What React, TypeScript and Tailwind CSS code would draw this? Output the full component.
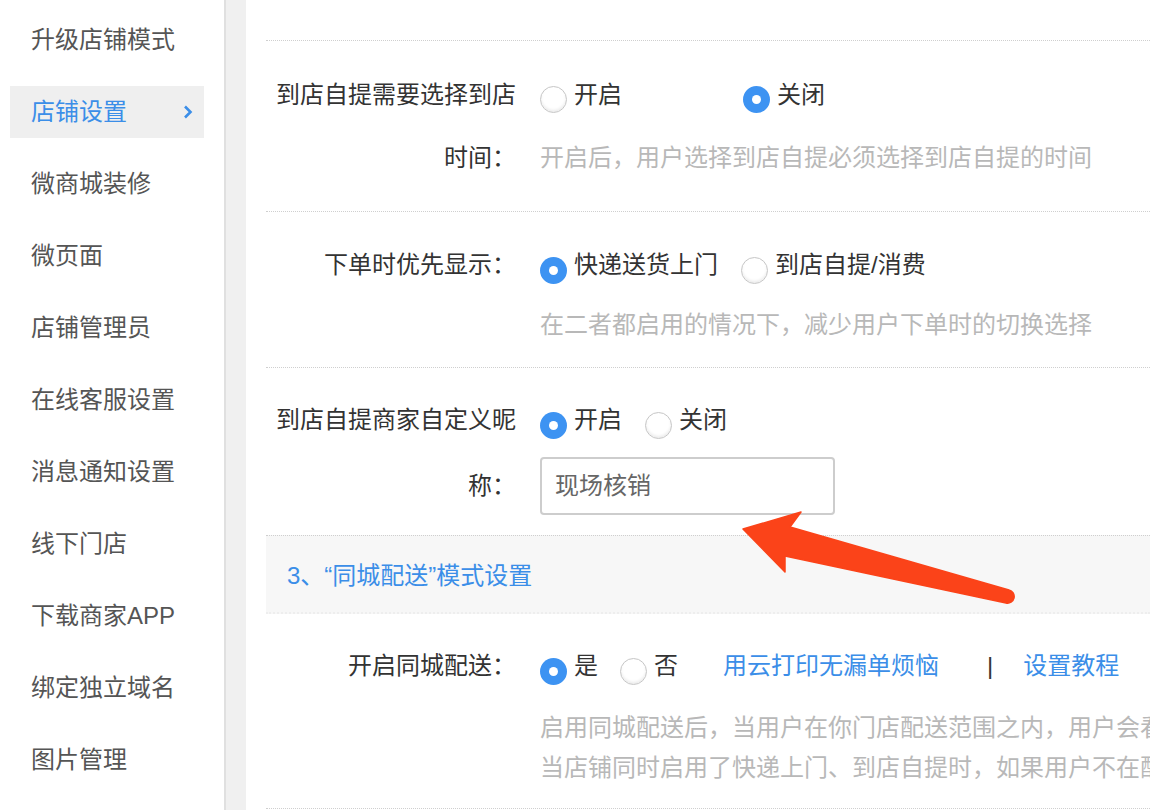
import React from 'react'

const menu = [
  '升级店铺模式',
  '店铺设置',
  '微商城装修',
  '微页面',
  '店铺管理员',
  '在线客服设置',
  '消息通知设置',
  '线下门店',
  '下载商家APP',
  '绑定独立域名',
  '图片管理',
]

function Radio({ checked }: { checked?: boolean }) {
  if (checked) {
    return (
      <span className="w-[27px] h-[27px] mt-[10px] shrink-0 rounded-full bg-[#3d93f2] flex items-center justify-center">
        <span className="w-[9px] h-[9px] rounded-full bg-white" />
      </span>
    )
  }
  return (
    <span className="w-[27px] h-[27px] mt-[10px] shrink-0 rounded-full border border-[#c6c6c6] bg-white shadow-[inset_0_-2px_3px_rgba(0,0,0,0.08)]" />
  )
}

function Option({ checked, label, className = '' }: { checked?: boolean; label: string; className?: string }) {
  return (
    <div className={`flex items-center ${className}`}>
      <Radio checked={checked} />
      <span className="ml-[7px] text-[#333]">{label}</span>
    </div>
  )
}

export default function App() {
  return (
    <div className="relative w-full h-[810px] overflow-hidden bg-white flex text-[24px] font-['Liberation_Sans','Noto_Sans_CJK_SC',sans-serif]">
      {/* Sidebar */}
      <div className="w-[224px] shrink-0 px-[10px] pt-[4px] flex flex-col">
        {menu.map((item) => {
          const active = item === '店铺设置'
          return (
            <div key={item} className="h-[72px] shrink-0 flex items-center">
              <div
                className={`w-[194px] h-[52px] pl-[21px] flex items-center ${
                  active ? 'bg-[#efefef] text-[#3b8ee8]' : 'text-[#555]'
                }`}
              >
                <span>{item}</span>
                {active && (
                  <svg className="ml-auto mr-[11px]" width="10" height="14" viewBox="0 0 10 14">
                    <path d="M2 1.5 L7.5 7 L2 12.5" fill="none" stroke="#3b8ee8" strokeWidth="2.6" />
                  </svg>
                )}
              </div>
            </div>
          )
        })}
      </div>
      <div className="w-[22px] shrink-0 border-l-2 border-[#e0e0e0] bg-[#f0f0f0]" />

      {/* Main */}
      <div className="flex-1 min-w-0 pl-[20px] pt-[40px]">
        {/* Row 1 */}
        <div className="border-t border-dotted border-[#cfcfcf] pt-[22px] pb-[22px] flex">
          <div className="w-[250px] shrink-0 text-right text-[#333]">
            <div className="leading-[63px]">到店自提需要选择到店</div>
            <div className="leading-[63px]">时间：</div>
          </div>
          <div className="ml-[24px] flex-1 min-w-0">
            <div className="h-[63px] flex items-center">
              <Option label="开启" />
              <Option checked label="关闭" className="ml-[121px]" />
            </div>
            <div className="h-[63px] flex items-center text-[#b8b8b8] whitespace-nowrap">
              开启后，用户选择到店自提必须选择到店自提的时间
            </div>
          </div>
        </div>

        {/* Row 2 */}
        <div className="border-t border-dotted border-[#cfcfcf] pt-[23px] pb-[12px] flex">
          <div className="w-[250px] shrink-0 text-right text-[#333] leading-[60px]">下单时优先显示：</div>
          <div className="ml-[24px] flex-1 min-w-0">
            <div className="h-[60px] flex items-center">
              <Option checked label="快递送货上门" />
              <Option label="到店自提/消费" className="ml-[23px]" />
            </div>
            <div className="h-[60px] flex items-center text-[#b8b8b8] whitespace-nowrap">
              在二者都启用的情况下，减少用户下单时的切换选择
            </div>
          </div>
        </div>

        {/* Row 3 */}
        <div className="border-t border-dotted border-[#cfcfcf] pt-[22px] pb-[13px] flex">
          <div className="w-[250px] shrink-0 text-right text-[#333]">
            <div className="leading-[60px]">到店自提商家自定义昵</div>
            <div className="leading-[72px]">称：</div>
          </div>
          <div className="ml-[24px] flex-1 min-w-0">
            <div className="h-[60px] flex items-center">
              <Option checked label="开启" />
              <Option label="关闭" className="ml-[23px]" />
            </div>
            <div className="mt-[7px] w-[295px] h-[58px] border-2 border-[#cdcdcd] rounded-[4px] pl-[13px] flex items-center text-[#666]">
              现场核销
            </div>
          </div>
        </div>

        {/* Section header */}
        <div className="border-t border-dotted border-[#cfcfcf] bg-[#f7f7f7] border-b-2 border-b-[#eeeeee] h-[79px] pt-[4px] pl-[21px] flex items-center text-[#3b8ee8]">
          3、“同城配送”模式设置
        </div>

        {/* Row 4 */}
        <div className="pt-[22px] pb-[20px] flex border-b border-dotted border-[#cfcfcf]">
          <div className="w-[250px] shrink-0 text-right text-[#333] leading-[60px]">开启同城配送：</div>
          <div className="ml-[24px] flex-1 min-w-0">
            <div className="h-[60px] flex items-center whitespace-nowrap">
              <Option checked label="是" />
              <Option label="否" className="ml-[22px]" />
              <span className="ml-[45px] text-[#3b8ee8]">用云打印无漏单烦恼</span>
              <span className="ml-[48px] text-[#333]">|</span>
              <span className="ml-[30px] text-[#3b8ee8]">设置教程</span>
            </div>
            <div className="mt-[12px] text-[#b8b8b8] leading-[40px] whitespace-nowrap">
              <div>启用同城配送后，当用户在你门店配送范围之内，用户会看到同城配送的选项</div>
              <div>当店铺同时启用了快递上门、到店自提时，如果用户不在配送范围内，则不显示</div>
            </div>
          </div>
        </div>
      </div>

      {/* Annotation arrow */}
      <svg className="absolute left-0 top-0 pointer-events-none" width="1150" height="810" viewBox="0 0 1150 810">
        <path
          d="M743 529 L801 512 L790 527 L1009 590 A6.5 6.5 0 0 1 1006 603 L785 556 L785 572 Z"
          fill="#fb4319"
          stroke="#fb4319"
          strokeWidth="1.5"
          strokeLinejoin="round"
        />
      </svg>
    </div>
  )
}
